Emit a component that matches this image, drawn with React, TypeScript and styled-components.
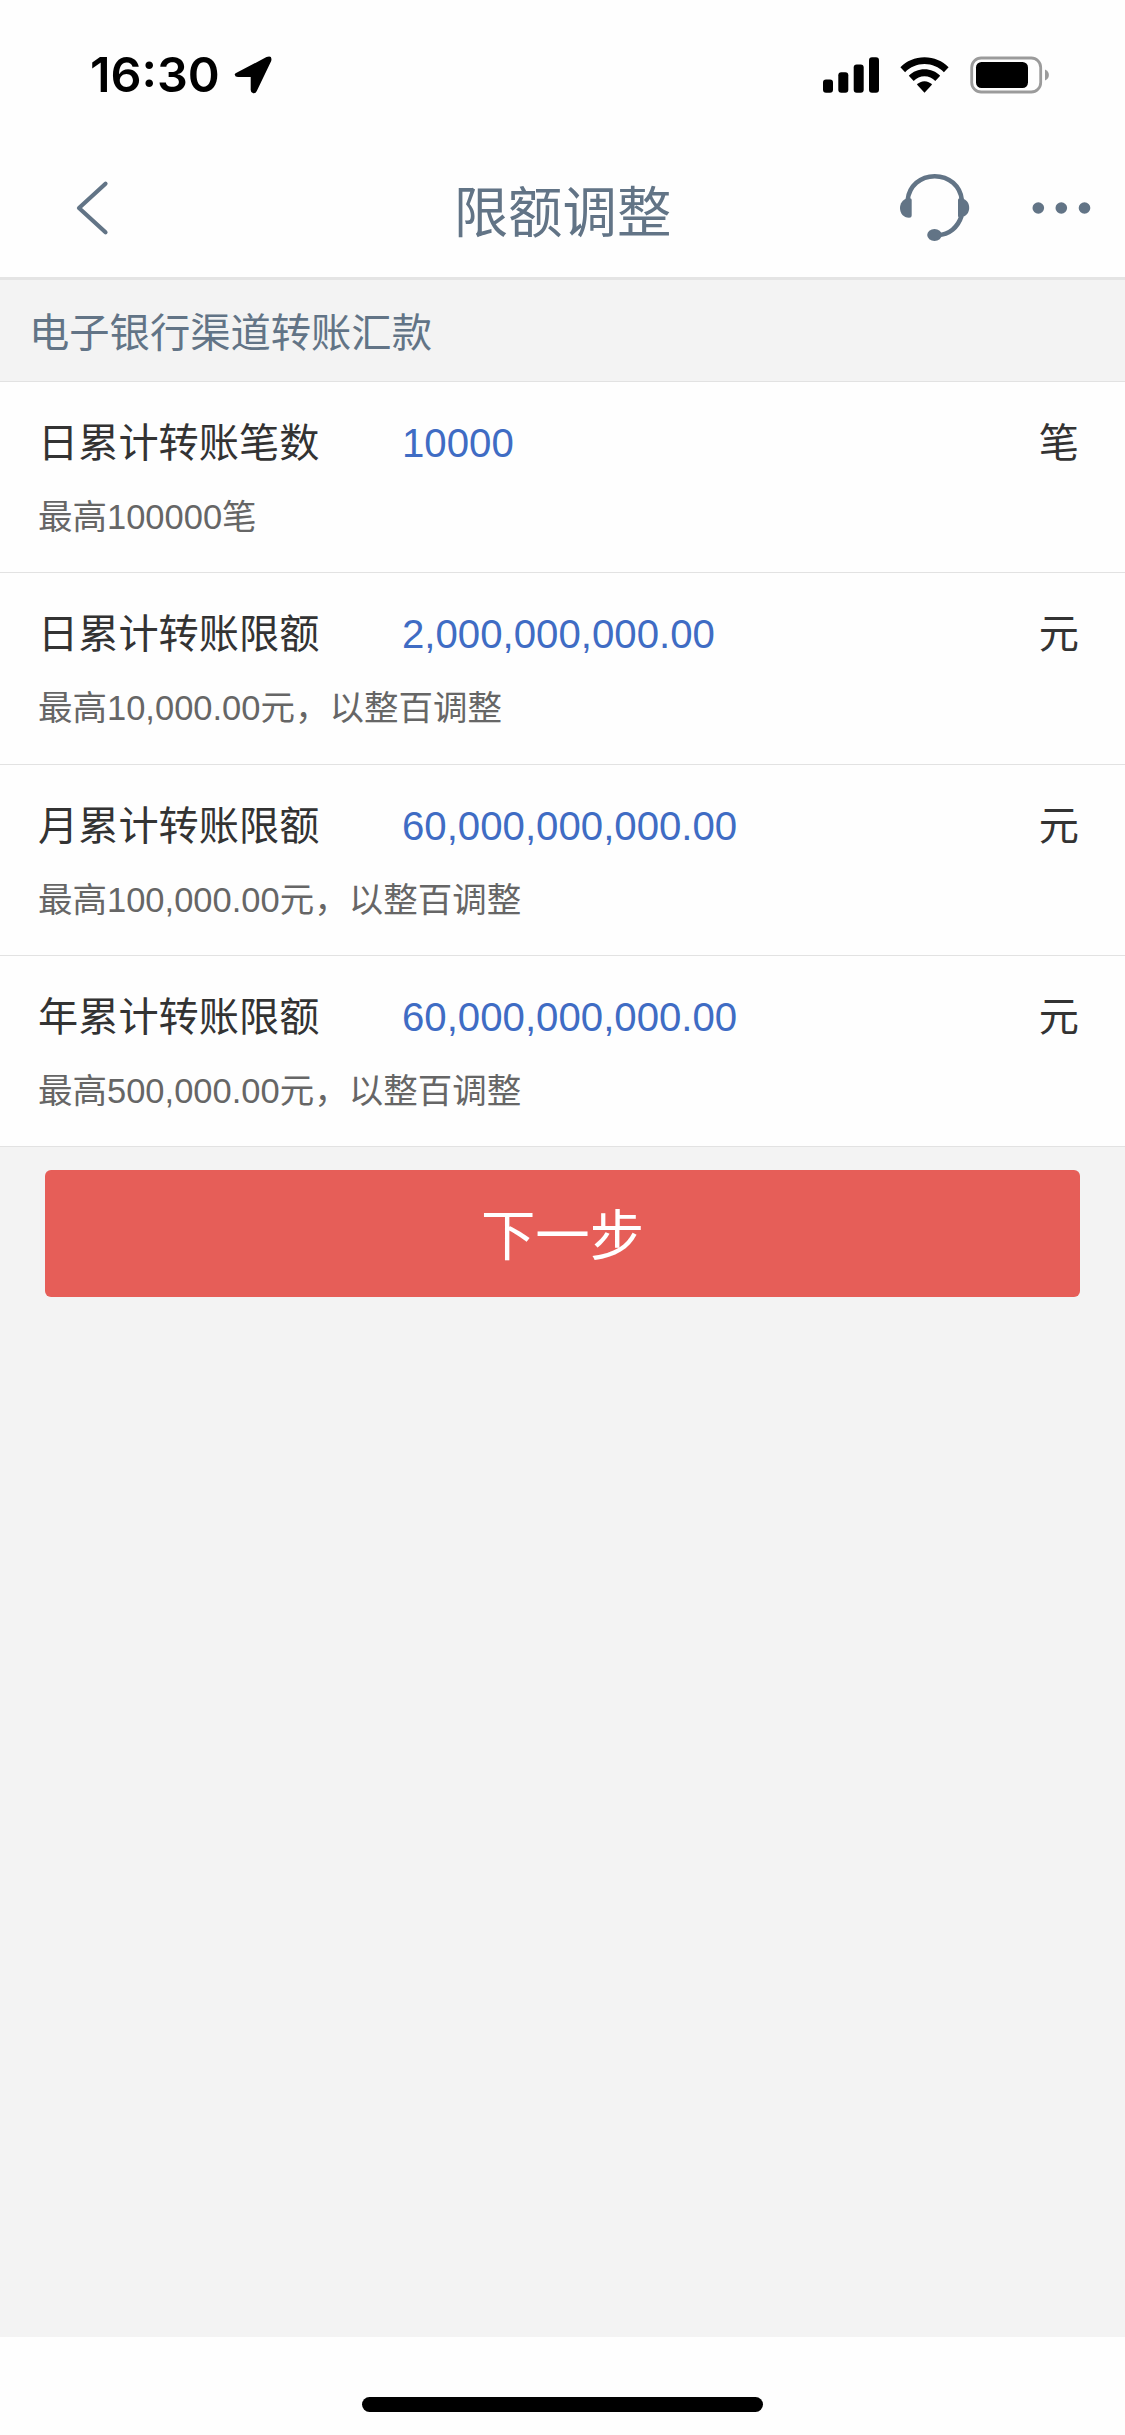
import React from "react";
import styled, { createGlobalStyle } from "styled-components";

const GlobalStyle = createGlobalStyle`
  html, body {
    margin: 0;
    padding: 0;
    background: #fff;
  }
  * {
    box-sizing: border-box;
  }
`;

const Screen = styled("div")`
  display: flex;
  flex-direction: column;
  width: 1125px;
  height: 2435px;
  background: #fefefe;
  font-family: "Liberation Sans", "Noto Sans CJK SC", sans-serif;
  overflow: hidden;
`;

const StatusBar = styled("div")`
  display: flex;
  align-items: center;
  height: 132px;
  padding: 18px 76px 0 90px;
`;

const Clock = styled("span")`
  width: 144px;
  font-family: "Inter", sans-serif;
  font-size: 48.5px;
  font-weight: 600;
  line-height: 60px;
  color: #000;
`;

const StatusIcons = styled("div")`
  display: flex;
  align-items: center;
  gap: 21px;
  margin-left: auto;
`;

const NavBar = styled("header")`
  display: grid;
  grid-template-columns: 300px 1fr 300px;
  align-items: center;
  height: 148px;
  border-bottom: 3px solid #e4e4e4;
  color: #627486;
`;

const BackButton = styled("button")`
  display: flex;
  margin: 6px 0 0 75px;
  padding: 0;
  border: none;
  background: none;
  color: inherit;
  cursor: pointer;
`;

const Title = styled("h1")`
  margin: 18px 0 0;
  text-align: center;
  font-size: 54.4px;
  font-weight: 400;
  line-height: 60px;
`;

const NavActions = styled("div")`
  display: flex;
  align-items: center;
  justify-content: flex-end;
  gap: 62px;
  margin-top: 6px;
  padding-right: 34px;
`;

const SectionTitle = styled("h2")`
  height: 102px;
  margin: 0;
  padding-left: 29px;
  border-bottom: 1px solid #e2e2e2;
  background: #f3f3f3;
  color: #627486;
  font-size: 40.3px;
  font-weight: 400;
  line-height: 107px;
`;

const Row = styled("div")`
  height: 191.25px;
  padding: 36px 46px 0 38px;
  border-bottom: 1px solid #e2e2e2;
`;

const RowMain = styled("div")`
  display: flex;
  align-items: center;
  height: 52px;
  font-size: 40.2px;
  line-height: 52px;
  color: #333;
`;

const Label = styled("span")`
  width: 364px;
`;

const Value = styled("span")`
  flex: 1;
  color: #3f6cc4;
`;

const Hint = styled("p")`
  margin: 25px 0 0;
  font-size: 34.5px;
  line-height: 44px;
  color: #666;
`;

const Content = styled("main")`
  flex: 1;
  padding: 23px 45px 0;
  background: #f3f3f3;
`;

const NextButton = styled("button")`
  display: block;
  width: 100%;
  height: 127px;
  padding: 7px 0 0;
  border: none;
  border-radius: 6px;
  background: #e65e58;
  color: #fff;
  font-family: inherit;
  font-size: 54.4px;
  line-height: 120px;
  cursor: pointer;
`;

const HomeArea = styled("footer")`
  height: 98px;
  padding-top: 60px;
`;

const HomeIndicator = styled("div")`
  width: 401px;
  height: 15px;
  margin: 0 auto;
  border-radius: 8px;
  background: #000;
`;

const limits = [
  { label: "日累计转账笔数", value: "10000", unit: "笔", hint: "最高100000笔" },
  {
    label: "日累计转账限额",
    value: "2,000,000,000.00",
    unit: "元",
    hint: "最高10,000.00元，以整百调整"
  },
  {
    label: "月累计转账限额",
    value: "60,000,000,000.00",
    unit: "元",
    hint: "最高100,000.00元，以整百调整"
  },
  {
    label: "年累计转账限额",
    value: "60,000,000,000.00",
    unit: "元",
    hint: "最高500,000.00元，以整百调整"
  }
];

const LocationIcon = () => (
  <svg width="38" height="38" viewBox="0 0 38 38">
    <path
      d="M3 16.5 L32.5 1.1 Q38.6 -1 37.2 5 L22.8 35 Q21.6 37.6 19.2 37.2 Q16.7 36.8 16.7 34 V21.1 H4 Q1.1 21.1 0.7 18.8 Q0.5 17.4 3 16.5 Z"
      fill="#000"
    />
  </svg>
);

const SignalIcon = () => (
  <svg width="56" height="36" viewBox="0 0 56 36">
    <rect x="0" y="22.5" width="10" height="13.2" rx="3" />
    <rect x="15.3" y="15.3" width="10" height="20.4" rx="3" />
    <rect x="30.7" y="7.5" width="10" height="28.2" rx="3" />
    <rect x="46" y="0.2" width="10" height="35.5" rx="3" />
  </svg>
);

const WifiIcon = () => (
  <svg width="49" height="36" viewBox="0 0 49 36">
    <path d="M24.5 0.2 C34 0.2 42.5 4 48.6 10.2 L43.9 15.2 C38.8 10.2 32 7.1 24.5 7.1 C17 7.1 10.2 10.2 5.1 15.2 L0.4 10.2 C6.5 4 15 0.2 24.5 0.2 Z" />
    <path d="M24.5 12.3 C30.6 12.3 36 14.6 40.2 18.8 L35.3 23.9 C32.4 21.1 28.7 19.3 24.5 19.3 C20.3 19.3 16.6 21.1 13.7 23.9 L8.8 18.8 C13 14.6 18.4 12.3 24.5 12.3 Z" />
    <path d="M24.5 24.3 C27.6 24.3 30.1 25.6 32.1 27.6 L24.5 35.7 L16.9 27.6 C18.9 25.6 21.4 24.3 24.5 24.3 Z" />
  </svg>
);

const BatteryIcon = () => (
  <svg width="79" height="38" viewBox="0 0 79 38">
    <rect
      x="1.7"
      y="2"
      width="69"
      height="34"
      rx="9.5"
      fill="none"
      stroke="#9b9b9b"
      strokeWidth="2.8"
    />
    <rect x="6" y="6" width="52" height="26" rx="5.5" />
    <path d="M75 13.5 C80.2 15.5 80.2 22.5 75 24.5 Z" fill="#9b9b9b" />
  </svg>
);

const BackIcon = () => (
  <svg width="34" height="56" viewBox="0 0 34 56">
    <path
      d="M30.5 3.7 L4 28 L30.5 52.3"
      fill="none"
      stroke="currentColor"
      strokeWidth="4.2"
      strokeLinecap="round"
      strokeLinejoin="round"
    />
  </svg>
);

const HeadsetIcon = () => (
  <svg width="70" height="70" viewBox="0 0 70 70" fill="currentColor">
    <path
      d="M7.7 27 C9 13 20.5 3.2 34.7 3.2 C49 3.2 60.4 13 61.8 27 M61.5 43 C57.8 54.5 49 61.7 38 62"
      fill="none"
      stroke="currentColor"
      strokeWidth="4.6"
    />
    <path d="M7 25.2 H10 Q11.7 25.2 11.7 27 V42.2 Q11.7 44.7 9 44.7 C3.5 44.7 0 40.5 0 35 C0 30.2 2.7 26.7 7 25.2 Z" />
    <path d="M62.4 25.2 H59.7 Q58 25.2 58 27 V43 Q58 44.2 59.7 44.2 H62.4 C66.5 42.7 69.2 39.5 69.2 34.7 C69.2 29.9 66.5 26.7 62.4 25.2 Z" />
    <ellipse cx="34.5" cy="62" rx="7.3" ry="6" />
  </svg>
);

const MoreIcon = () => (
  <svg width="59" height="12" viewBox="0 0 59 12" fill="currentColor">
    <circle cx="6.3" cy="6" r="5.8" />
    <circle cx="29.3" cy="6" r="5.8" />
    <circle cx="52.5" cy="6" r="5.8" />
  </svg>
);

export default class App extends React.Component {
  renderRows() {
    return limits.map(item => (
      <Row key={item.label}>
        <RowMain>
          <Label>{item.label}</Label>
          <Value>{item.value}</Value>
          <span>{item.unit}</span>
        </RowMain>
        <Hint>{item.hint}</Hint>
      </Row>
    ));
  }

  render() {
    return (
      <>
        <GlobalStyle />
        <Screen lang="zh-CN">
          <StatusBar>
            <Clock>16:30</Clock>
            <LocationIcon />
            <StatusIcons>
              <SignalIcon />
              <WifiIcon />
              <BatteryIcon />
            </StatusIcons>
          </StatusBar>
          <NavBar>
            <BackButton aria-label="返回">
              <BackIcon />
            </BackButton>
            <Title>限额调整</Title>
            <NavActions>
              <HeadsetIcon />
              <MoreIcon />
            </NavActions>
          </NavBar>
          <SectionTitle>电子银行渠道转账汇款</SectionTitle>
          {this.renderRows()}
          <Content>
            <NextButton>下一步</NextButton>
          </Content>
          <HomeArea>
            <HomeIndicator />
          </HomeArea>
        </Screen>
      </>
    );
  }
}
